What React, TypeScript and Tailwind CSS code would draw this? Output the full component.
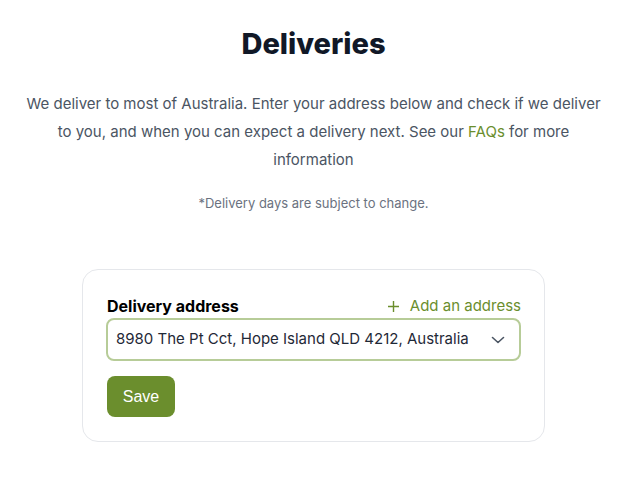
import React from "react";

const App = () => {
    return (
        <div className="min-h-screen bg-white font-['Inter',sans-serif]">
            <div className="w-[627px] pt-[26px] pb-[46px] flex flex-col items-center">
                <h1 className="text-[29px] leading-[36px] font-extrabold text-[#111827]">
                    Deliveries
                </h1>
                <p className="mt-[28px] max-w-[582px] text-center text-[15px] leading-[28px] text-[#4b5563]">
                    We deliver to most of Australia. Enter your address below and check if we deliver to you, and
                    when you can expect a delivery next. See our{" "}
                    <a href="#" className="text-[#6b8e2d]">
                        FAQs
                    </a>{" "}
                    for more information
                </p>
                <p className="mt-[19px] text-[13px] leading-[20px] text-[#6b7280]">
                    *Delivery days are subject to change.
                </p>

                <div className="mt-[56px] w-[463px] rounded-[16px] border border-[#e5e7eb] px-[23px] pt-[26px] pb-[24px]">
                    <div className="flex items-end justify-between pl-px">
                        <label className="text-[16px] leading-[20px] font-bold text-black">
                            Delivery address
                        </label>
                        <button type="button" className="flex items-center gap-[11px] text-[15px] leading-[20px] text-[#6b8e2d]">
                            <svg width="11" height="11" viewBox="0 0 11 11" fill="none" stroke="#6b8e2d" strokeWidth="1.4">
                                <path d="M5.5 0v11M0 5.5h11" />
                            </svg>
                            Add an address
                        </button>
                    </div>
                    <div className="mt-[2px] flex h-[43px] items-center justify-between rounded-[8px] border-2 border-[#b7cc98] pl-[8px] pr-[14px]">
                        <span className="text-[15px] text-[#1f2937]">
                            8980 The Pt Cct, Hope Island QLD 4212, Australia
                        </span>
                        <svg width="14" height="8" viewBox="0 0 14 8" fill="none" stroke="#4b5563" strokeWidth="1.6" strokeLinecap="round" strokeLinejoin="round">
                            <path d="M1.5 1.5l5.5 5 5.5-5" />
                        </svg>
                    </div>
                    <button
                        type="button"
                        className="mt-[15px] ml-px h-[41px] w-[68px] rounded-[8px] bg-[#6b8e2d] text-[16px] text-white font-['Liberation_Sans',sans-serif]"
                    >
                        Save
                    </button>
                </div>
            </div>
        </div>
    );
};

export default App;
